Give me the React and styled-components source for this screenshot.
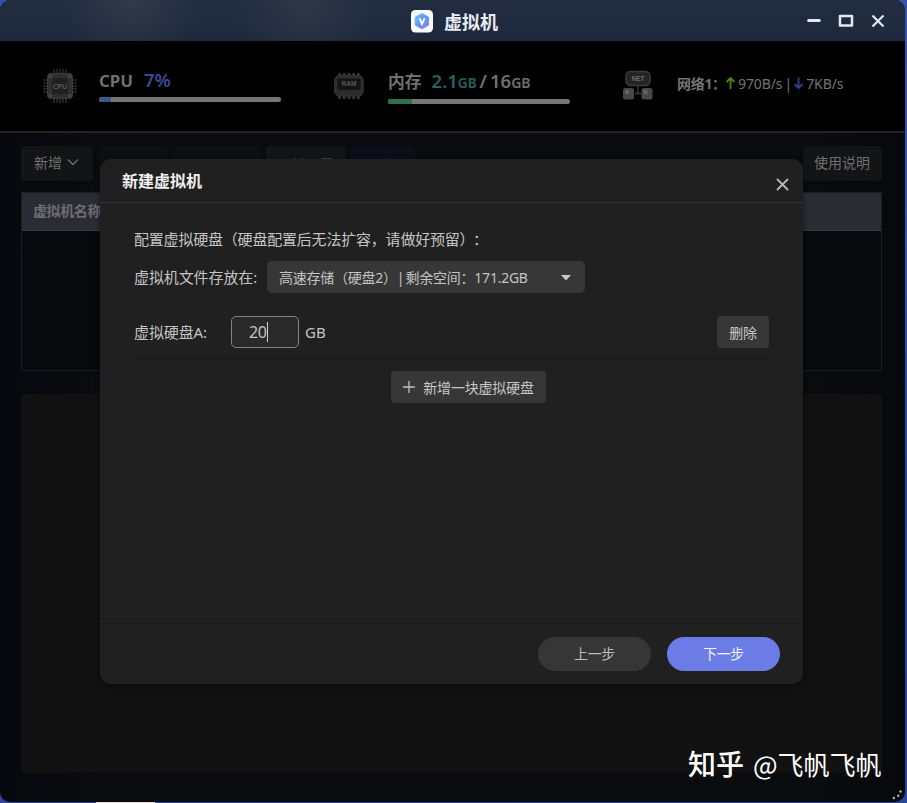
import React from "react";
import styled, { createGlobalStyle } from "styled-components";

const Global = createGlobalStyle`
  * { box-sizing: border-box; }
  html, body { margin: 0; padding: 0; }
  body {
    width: 907px; height: 803px; overflow: hidden; background: #2c4595;
    font-family: "Noto Sans", "Noto Sans CJK SC", sans-serif;
  }
  button { font-family: inherit; border: 0; padding: 0; margin: 0; }
`;

const Desktop = styled.div`
  position: relative;
  width: 907px;
  height: 803px;
  background: linear-gradient(#3553a8, #2d58b8 30%, #24479a 60%, #2b459c);
`;

const TaskMark = styled.div`
  position: absolute;
  left: 96px;
  bottom: 0;
  width: 59px;
  height: 1px;
  background: #e6dcdc;
`;

const Window = styled.div`
  display: flex;
  flex-direction: column;
  width: 905px;
  height: 802px;
  border-radius: 10px;
  overflow: hidden;
  background: linear-gradient(90deg, #07080e, #0a0b0e 10%, #0a0b0e 90%, #07080b);
`;

const TitleBar = styled.header`
  flex: none;
  display: grid;
  grid-template-columns: 1fr auto 1fr;
  align-items: center;
  height: 41px;
  background:
    radial-gradient(ellipse 70px 60px at 130px 0, #323a47, transparent),
    radial-gradient(ellipse 70px 60px at 305px 5px, #2f3745, transparent),
    linear-gradient(#222d42, #1e293d);
`;

const Brand = styled.div`
  grid-column: 2;
  display: flex;
  align-items: center;
  gap: 11px;
  height: 41px;
  padding: 2px 0 0 4px;
`;

const BrandName = styled.h1`
  margin: 0;
  font-size: 18px;
  line-height: 24px;
  font-weight: 700;
  color: #e9ecf3;
`;

const WindowControls = styled.div`
  display: flex;
  justify-content: flex-end;
  gap: 14px;
  padding-right: 18px;
`;

const Stats = styled.section`
  flex: none;
  display: flex;
  height: 92px;
  background: #000;
  border-bottom: 2px solid #222324;
`;

const Stat = styled.div`
  display: flex;
  width: ${(p) => p.$width}px;
  padding: ${(p) => p.$top}px 0 0 ${(p) => p.$left}px;
  gap: ${(p) => p.$gap}px;
`;

const RamSlot = styled.div`
  padding-top: 3px;
`;

const Meter = styled.div`
  width: 182px;
`;

const MeterLabel = styled.div`
  display: flex;
  align-items: baseline;
  height: 24px;
  line-height: 24px;
  font-size: 16.8px;
  font-weight: 700;
  color: #707070;
  white-space: nowrap;
`;

const MeterValue = styled.span`
  margin-left: ${(p) => p.$left || 0}px;
  font-size: ${(p) => p.$size || 18.5}px;
  font-weight: 600;
  color: ${(p) => p.$color || "inherit"};
`;

const Track = styled.div`
  height: 5px;
  margin-top: ${(p) => p.$top}px;
  border-radius: 3px;
  background: #767676;
  overflow: hidden;
`;

const Fill = styled.div`
  width: ${(p) => p.$width}px;
  height: 5px;
  background: ${(p) => p.$color};
`;

const Network = styled.div`
  display: flex;
  align-items: center;
  height: 24px;
  margin-top: 1px;
  font-size: 14px;
  color: #747474;
  white-space: nowrap;
`;

const NetName = styled.strong`
  width: 48px;
  font-weight: 700;
  letter-spacing: -0.3px;
`;

const Rate = styled.span`
  margin-left: 2px;
  letter-spacing: -0.1px;
`;

const Divider = styled.span`
  margin: 0 1px 0 2px;
`;

const Toolbar = styled.nav`
  flex: none;
  display: flex;
  height: 48px;
  margin: 13px 23px 0 21px;
  gap: 5px;
`;

const toolFill = { dim: "#0d0e10", blue: "#0d0e1a", covered: "#131416" };
const toolText = { dim: "#1b1c1f", blue: "#242638", covered: "#505153" };

const ToolButton = styled.button`
  display: flex;
  align-items: center;
  justify-content: center;
  gap: 5px;
  width: ${(p) => p.$width}px;
  height: 35px;
  margin-left: ${(p) => (p.$last ? "auto" : "0")};
  padding: ${(p) => (p.$tone ? "1px 0 0" : "0 1px 3px 0")};
  border-radius: 4px;
  background: ${(p) => toolFill[p.$tone] || "#131416"};
  color: ${(p) => toolText[p.$tone] || "#6f7071"};
  font-size: 14px;
  white-space: nowrap;
`;

const Table = styled.section`
  flex: none;
  height: 179px;
  margin: -2px 23px 0 21px;
  border: 1px solid #1b1c20;
  background: #08090c;
`;

const TableHead = styled.div`
  height: 38px;
  padding-left: 11px;
  background: #2b2b34;
  border-bottom: 1px solid #36363e;
  font-size: 14px;
  line-height: 36px;
  font-weight: 700;
  letter-spacing: -0.4px;
  color: #6d6d72;
`;

const Detail = styled.section`
  flex: none;
  height: 379px;
  margin: 23px 23px 0 21px;
  border-radius: 4px;
  background: #111111;
`;

const Dialog = styled.section`
  position: absolute;
  left: 100px;
  top: 159px;
  display: flex;
  flex-direction: column;
  width: 703px;
  height: 525px;
  border-radius: 11px;
  background: #202020;
  box-shadow: 0 1px 5px rgba(0, 0, 0, 0.45);
  color: #c4c4c4;
`;

const DialogHead = styled.header`
  display: flex;
  justify-content: space-between;
  height: 44px;
  padding: 11px 13px 0 22px;
  border-bottom: 1px solid #353535;
`;

const DialogTitle = styled.h2`
  margin: -1px 0 0;
  font-size: 16px;
  line-height: 24px;
  font-weight: 700;
  color: #f0f0f0;
`;

const DialogBody = styled.div`
  flex: 1;
  padding: 24px 34px 0;
`;

const Hint = styled.p`
  margin: 0;
  height: 24px;
  line-height: 24px;
  font-size: 15px;
  letter-spacing: -0.2px;
  white-space: nowrap;
`;

const HintColon = styled.span`
  margin-left: 6px;
`;

const Row = styled.div`
  display: flex;
  align-items: center;
  height: 32px;
  margin-top: ${(p) => p.$top}px;
`;

const Label = styled.label`
  width: ${(p) => p.$width}px;
  padding-bottom: 2px;
  font-size: 15px;
  letter-spacing: -0.1px;
  white-space: nowrap;
`;

const Select = styled.div`
  display: flex;
  align-items: center;
  justify-content: space-between;
  width: 318px;
  height: 32px;
  padding: 0 14px 1px 12px;
  border-radius: 5px;
  background: #373737;
  font-size: 14px;
  letter-spacing: -0.25px;
  word-spacing: -2px;
  white-space: nowrap;
`;

const SelectArrow = styled.svg`
  margin-top: 2px;
`;

const SizeField = styled.div`
  display: flex;
  align-items: center;
  width: 68px;
  height: 32px;
  padding-left: 17px;
  border: 1px solid #848484;
  border-radius: 5px;
  background: #292929;
  font-size: 16px;
  letter-spacing: -0.3px;
`;

const Caret = styled.span`
  width: 1px;
  height: 20px;
  background: #d0d0d0;
`;

const Unit = styled.span`
  margin-left: 6px;
  padding-bottom: 1px;
  font-size: 15px;
`;

const SmallButton = styled.button`
  display: flex;
  align-items: center;
  justify-content: center;
  gap: 8px;
  width: ${(p) => p.$width}px;
  height: 32px;
  margin-left: ${(p) => (p.$indent ? `${p.$indent}px` : "auto")};
  padding-bottom: 1px;
  border-radius: 4px;
  background: #373737;
  color: #c8c8c8;
  font-size: 14px;
  letter-spacing: -0.2px;
`;

const Separator = styled.div`
  height: 1px;
  margin: 10px 0 12px;
  background: #1c1c1c;
`;

const DialogFoot = styled.footer`
  display: flex;
  justify-content: flex-end;
  gap: 16px;
  height: 61px;
  padding: 13px 23px 0 0;
  border-top: 1px solid #1a1a1a;
`;

const PillButton = styled.button`
  width: 113px;
  height: 34px;
  border-radius: 17px;
  background: ${(p) => (p.$primary ? "#6c7ce6" : "#363636")};
  color: ${(p) => (p.$primary ? "#f4f5ff" : "#bcbcbc")};
  font-size: 14px;
  line-height: 32px;
  letter-spacing: -0.3px;
`;

const Watermark = styled.div`
  position: absolute;
  left: 688px;
  top: 743px;
  display: flex;
  align-items: center;
  gap: 9px;
  height: 40px;
  font-family: "Noto Sans CJK SC", sans-serif;
  font-size: 26px;
  color: #fff;
  white-space: nowrap;
`;

const WatermarkBrand = styled.span`
  font-size: 28px;
  font-weight: 500;
`;

const Grip = styled.svg`
  position: absolute;
  left: 891px;
  top: 789px;
`;

function Logo() {
  return (
    <svg width="22" height="23" viewBox="0 0 22 23">
      <defs>
        <linearGradient id="hex" x1="0" y1="0" x2="1" y2="1">
          <stop offset="0" stopColor="#69c8f8" />
          <stop offset=".55" stopColor="#6293f2" />
          <stop offset="1" stopColor="#9a7bed" />
        </linearGradient>
      </defs>
      <rect width="22" height="22.5" rx="4.5" fill="#fbfcff" />
      <path d="M11 3.6 17.600 7.200v7.900L11 18.900 4.200 15.100V7.200Z" fill="url(#hex)" stroke="url(#hex)" strokeWidth="1" strokeLinejoin="round" />
      <path d="M8.400 8.300 11 14l2.600-5.700" fill="none" stroke="#fff" strokeWidth="1.900" />
    </svg>
  );
}

function CpuIcon() {
  const pins = [12, 15, 18, 21, 24];
  return (
    <svg width="36" height="36" viewBox="0 0 36 36">
      <g stroke="#3c3c3c" strokeWidth="1.1">
        {pins.map((p) => (
          <path key={p} d={`M${p} 1v6M${p} 29v6M1 ${p}h6M29 ${p}h6`} />
        ))}
      </g>
      <rect x="5.500" y="5.500" width="25" height="25" rx="4" fill="#303030" stroke="#3a3a3a" />
      <g fill="#414141">
        <circle cx="8" cy="8" r="2.500" /><circle cx="28" cy="8" r="2.500" />
        <circle cx="8" cy="28" r="2.500" /><circle cx="28" cy="28" r="2.500" />
      </g>
      <rect x="10" y="10" width="16" height="16" rx="1" fill="#202020" stroke="#292929" />
      <text x="18" y="20.700" textAnchor="middle" fontSize="6.500" fill="#777" fontFamily="Liberation Sans">CPU</text>
    </svg>
  );
}

function RamIcon() {
  return (
    <svg width="32" height="28" viewBox="0 0 32 28">
      <path d="M6.500 1v4M11.200 1v4M15.900 1v4M20.600 1v4M25.300 1v4M6.500 22v5M11.200 22v5M15.900 22v5M20.600 22v5M25.300 22v5" stroke="#3a3a3a" strokeWidth="2.500" />
      <rect x="1.700" y="3.500" width="28.500" height="20.500" rx="4.500" fill="#2c2c2c" stroke="#363636" />
      <rect x="4.500" y="6.500" width="23" height="11.500" rx="2" fill="#131515" />
      <text x="16" y="14.400" textAnchor="middle" fontSize="6.500" fontWeight="700" fill="#535858" fontFamily="Liberation Sans">RAM</text>
    </svg>
  );
}

function NetIcon() {
  return (
    <svg width="32" height="30" viewBox="0 0 32 30">
      <path d="M16 15v8M13 23.500h6" stroke="#3e3e3e" strokeWidth="1.300" />
      <rect x="4" y="1.500" width="24" height="14" rx="4.500" fill="#242424" stroke="#3c3c3c" strokeWidth="1.500" />
      <text x="16" y="11" textAnchor="middle" fontSize="6.500" fontWeight="700" fill="#6c6c6c" fontFamily="Liberation Sans">NET</text>
      <rect x="1" y="18" width="11" height="11.500" rx="2.500" fill="#474747" />
      <rect x="19.500" y="18" width="11" height="11.500" rx="2.500" fill="#474747" />
      <path d="M3 20h4v4H3zM21.500 20h4v4h-4z" fill="#646464" />
    </svg>
  );
}

function Arrow({ color, down }) {
  return (
    <svg width="11" height="14" viewBox="0 0 11 14">
      <path d={down ? "M5.500 1.500v10.500M1.500 8l4 4 4-4" : "M5.500 13V2M1.500 6l4-4 4 4"} fill="none" stroke={color} strokeWidth="1.800" />
    </svg>
  );
}

export default function App() {
  return (
    <Desktop>
      <Global />
      <TaskMark />
      <Window>
        <TitleBar>
          <Brand>
            <Logo />
            <BrandName>虚拟机</BrandName>
          </Brand>
          <WindowControls>
            <svg width="18" height="18" viewBox="0 0 18 18"><path d="M3.700 8.500h10.600" stroke="#e4e8f3" strokeWidth="3" strokeLinecap="round" /></svg>
            <svg width="18" height="18" viewBox="0 0 18 18"><path d="M3 4h12v9.500H3z" fill="none" stroke="#e4e8f3" strokeWidth="2.500" strokeLinejoin="round" /></svg>
            <svg width="18" height="18" viewBox="0 0 18 18"><path d="M3.500 3.500l11 11M14.500 3.500l-11 11" stroke="#e4e8f3" strokeWidth="2.200" /></svg>
          </WindowControls>
        </TitleBar>

        <Stats>
          <Stat $left={42} $top={27} $width={333} $gap={21}>
            <CpuIcon />
            <Meter>
              <MeterLabel>CPU<MeterValue $left={11} $color="#3b4b91">7%</MeterValue></MeterLabel>
              <Track $top={5}><Fill $width={12} $color="#37598b" /></Track>
            </Meter>
          </Stat>
          <Stat $left={0} $top={28} $width={288} $gap={23}>
            <RamSlot><RamIcon /></RamSlot>
            <Meter>
              <MeterLabel>
                内存
                <MeterValue $left={10} $color="#25645f">2.1</MeterValue>
                <MeterValue $size={13.5} $color="#25645f">GB</MeterValue>
                <MeterValue $left={3}>/</MeterValue>
                <MeterValue $left={3}>16</MeterValue>
                <MeterValue $size={14}>GB</MeterValue>
              </MeterLabel>
              <Track $top={6}><Fill $width={24} $color="#2d7049" /></Track>
            </Meter>
          </Stat>
          <Stat $left={1} $top={29} $width={240} $gap={23}>
            <NetIcon />
            <Network>
              <NetName>网络1：</NetName>
              <Arrow color="#4f8412" />
              <Rate>970B/s</Rate>
              <Divider>|</Divider>
              <Arrow color="#333d94" down />
              <Rate>7KB/s</Rate>
            </Network>
          </Stat>
        </Stats>

        <Toolbar>
          <ToolButton $width={72}>
            新增
            <svg width="12" height="8" viewBox="0 0 12 8"><path d="M1 1.500l5 5 5-5" fill="none" stroke="#6f7071" strokeWidth="1.300" /></svg>
          </ToolButton>
          <ToolButton $width={70} $tone="dim">操作</ToolButton>
          <ToolButton $width={88} $tone="dim">更多</ToolButton>
          <ToolButton $width={80} $tone="covered">网桥设置</ToolButton>
          <ToolButton $width={64} $tone="blue">日志</ToolButton>
          <ToolButton $width={79} $last>使用说明</ToolButton>
        </Toolbar>

        <Table><TableHead>虚拟机名称</TableHead></Table>
        <Detail />
      </Window>

      <Dialog>
        <DialogHead>
          <DialogTitle>新建虚拟机</DialogTitle>
          <svg width="15" height="28" viewBox="0 0 15 28"><path d="M2 9l11 11M13 9L2 20" stroke="#b8b8b8" strokeWidth="1.800" /></svg>
        </DialogHead>
        <DialogBody>
          <Hint>配置虚拟硬盘（硬盘配置后无法扩容，请做好预留）<HintColon>：</HintColon></Hint>
          <Row $top={10}>
            <Label $width={133}>虚拟机文件存放在:</Label>
            <Select>
              高速存储（硬盘2）| 剩余空间：171.2GB
              <SelectArrow width="10" height="6" viewBox="0 0 10 6"><path d="M0 0h10L5 5.500Z" fill="#c9c9c9" /></SelectArrow>
            </Select>
          </Row>
          <Row $top={23}>
            <Label $width={97}>虚拟硬盘A:</Label>
            <SizeField>20<Caret /></SizeField>
            <Unit>GB</Unit>
            <SmallButton $width={52}>删除</SmallButton>
          </Row>
          <Separator />
          <SmallButton $width={155} $indent={257}>
            <svg width="12" height="12" viewBox="0 0 12 12"><path d="M6 0v12M0 6h12" stroke="#c0c0c0" strokeWidth="1.300" /></svg>
            新增一块虚拟硬盘
          </SmallButton>
        </DialogBody>
        <DialogFoot>
          <PillButton>上一步</PillButton>
          <PillButton $primary>下一步</PillButton>
        </DialogFoot>
      </Dialog>

      <Grip width="14" height="13" viewBox="0 0 14 13">
        <g fill="#b5b5b5"><circle cx="9.500" cy="2.500" r="1.200" /><circle cx="7.200" cy="6.700" r="1.200" /><circle cx="2.800" cy="9" r="1.200" /></g>
      </Grip>
      <Watermark>
        <WatermarkBrand>知乎</WatermarkBrand>
        <span>@飞帆飞帆</span>
      </Watermark>
    </Desktop>
  );
}
